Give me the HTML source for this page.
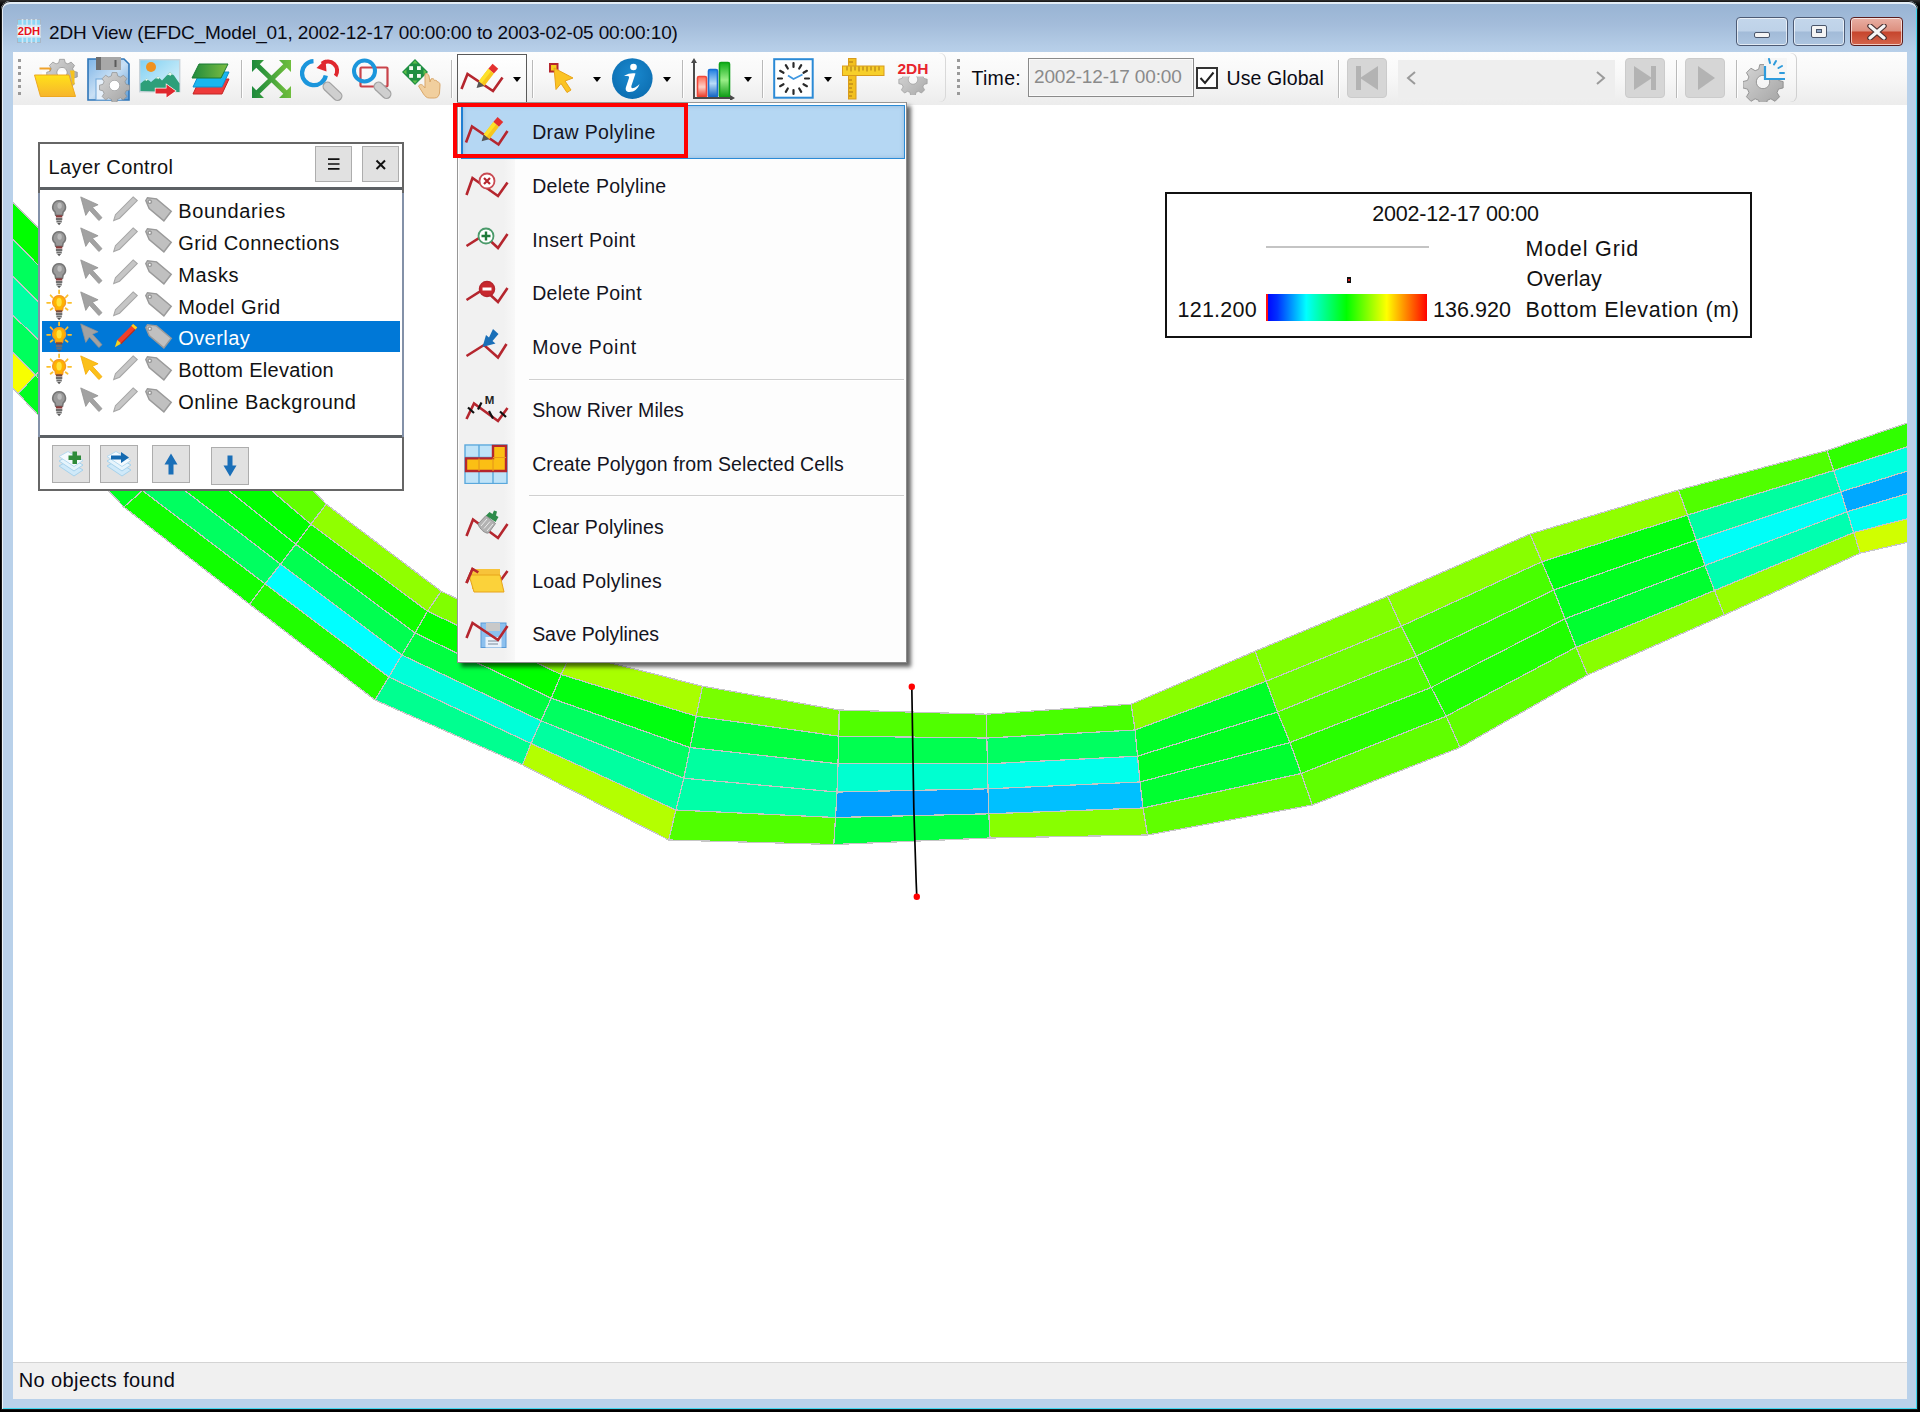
<!DOCTYPE html>
<html><head><meta charset="utf-8"><title>2DH View</title>
<style>
*{box-sizing:border-box;margin:0;padding:0}
html,body{width:1920px;height:1412px;overflow:hidden;background:#000}
body{background:linear-gradient(#2e2e2e 0,#111 3px,#000 6px)}
body{font-family:"Liberation Sans",sans-serif;color:#111;position:relative}
.abs{position:absolute}
#frame{position:absolute;left:1px;top:1px;width:1917px;height:1409px;border-radius:9px 9px 0 0;
 background:linear-gradient(#97b3d3 0px,#a3bcda 23px,#b4cce6 45px,#b9d1ea 53px,#b9d1ea 100%);
 box-shadow:inset 0 0 0 1px #1a1a1a, inset 0 3px 0 0 rgba(240,247,252,.85), inset 2px 0 0 0 rgba(255,255,255,.75), inset -2px -2px 0 0 #3fd8f0}
#client{position:absolute;left:13px;top:52px;width:1894px;height:1347px;background:#fff;overflow:hidden}
#title{position:absolute;left:49px;top:21px;font-size:19px;line-height:24px;white-space:nowrap;color:#0a0a14;letter-spacing:-0.13px}
.wbtn{position:absolute;top:17px;width:52px;height:29px;border-radius:4px;border:1px solid #4d5b75;
 background:linear-gradient(#c3d6eb 0,#bed2e8 48%,#a2bbd8 52%,#adc5e0 100%);box-shadow:inset 0 0 0 1px rgba(255,255,255,.65)}
#toolbar{position:absolute;left:0;top:0;width:1894px;height:53px;z-index:2;background:linear-gradient(#fdfdfd 0,#f8f8f8 45%,#ececec 100%)}
#tb2{position:absolute;left:934px;top:1px;width:850px;height:49px;border-radius:0 6px 6px 0;box-shadow:1px 0 0 #d0d0d0}
.sep{position:absolute;top:8px;width:2px;height:38px;background:#b9b9b9;border-right:1px solid #fff}
.grip{position:absolute;top:7px;width:3px;height:36px;background:repeating-linear-gradient(#9a9a9a 0,#9a9a9a 3px,transparent 3px,transparent 6.6px)}
.dd{position:absolute;top:25px;width:0;height:0;border-left:4.5px solid transparent;border-right:4.5px solid transparent;border-top:5px solid #000}
.ico{position:absolute}
#canvas{position:absolute;left:0;top:51px;width:1894px;height:1259px;background:#fff}
svg.river{position:absolute;left:0;top:0}
#status{position:absolute;left:0;top:1310px;width:1894px;height:37px;background:#f0f0f0;border-top:1px solid #d4d4d4;font-size:20px;line-height:34.5px;padding-left:5.700px;color:#0a0a14;letter-spacing:.4px}
</style></head><body>
<div id="frame"></div>
<!-- title bar -->
<svg class="abs" style="left:17px;top:19px" width="24" height="24" viewBox="0 0 24 24">
<rect x="0.5" y="0.5" width="23" height="23" fill="#8fd6f4" stroke="#a9b7c6"/>
<g stroke="#d4e6f4" stroke-width="1.6"><path d="M5.500 0v24M10 0v24M14.500 0v24M19 0v24M0 6.500h24M0 18h24"/></g>
<rect x="0.5" y="7.500" width="23" height="10" fill="#fff" opacity=".85"/>
<text x="12" y="16.2" font-family="Liberation Sans" font-weight="bold" font-size="11" text-anchor="middle" fill="#e8141c" textLength="22.500" lengthAdjust="spacingAndGlyphs">2DH</text>
</svg>
<div id="title">2DH View (EFDC_Model_01, 2002-12-17 00:00:00 to 2003-02-05 00:00:10)</div>
<div class="wbtn" style="left:1736px"><div class="abs" style="left:17px;top:14px;width:16px;height:6px;background:#f4f4f4;border:1px solid #4a566b;border-radius:2px"></div></div>
<div class="wbtn" style="left:1793px"><div class="abs" style="left:17px;top:7px;width:16px;height:13px;background:#f4f4f4;border:1px solid #4a566b;border-radius:2px"></div><div class="abs" style="left:22px;top:11px;width:6px;height:4px;background:#8fa7c6;border:1px solid #4a566b"></div></div>
<div class="wbtn" style="left:1850px;width:53px;border-color:#5b1c1c;background:linear-gradient(#e9b0a4 0,#dc8f7f 48%,#c6452d 52%,#d4654c 100%)">
<svg class="abs" style="left:16px;top:6px" width="20" height="16" viewBox="0 0 20 16"><path d="M3 2L17 14M17 2L3 14" stroke="#4a3030" stroke-width="5.5" stroke-linecap="round"/><path d="M3 2L17 14M17 2L3 14" stroke="#f6f6f6" stroke-width="3.2" stroke-linecap="round"/></svg></div>
<div id="client">
<div id="toolbar">
<div class="grip" style="left:5px"></div>
<!-- 1 folder gear -->
<svg class="ico" style="left:20px;top:6px" width="46" height="40" viewBox="0 0 46 40">
<defs><linearGradient id="gf" x1="0" y1="0" x2="0" y2="1"><stop offset="0" stop-color="#ffe11a"/><stop offset="1" stop-color="#f7b52c"/></linearGradient>
<linearGradient id="gg" x1="0" y1="0" x2="1" y2="1"><stop offset="0" stop-color="#d6d6d6"/><stop offset="1" stop-color="#a2a2a2"/></linearGradient></defs>
<path d="M6.500 10.500h11v3.500" fill="none" stroke="#f0a22a" stroke-width="2.200"/><path d="M9 13.500h28v8H9z" fill="#fff"/>
<g transform="translate(29,14.500) scale(1.1)"><path id="gear1" d="M-2.2,-12h4.4l.8,3.2 2.4,1 2.9,-1.7 3.1,3.1 -1.7,2.9 1,2.4 3.2,.8v4.4l-3.2,.8 -1,2.4 1.7,2.9 -3.1,3.1 -2.9,-1.7 -2.4,1 -.8,3.2h-4.4l-.8,-3.2 -2.4,-1 -2.9,1.7 -3.1,-3.1 1.7,-2.9 -1,-2.4 -3.2,-.8v-4.4l3.2,-.8 1,-2.4 -1.7,-2.9 3.1,-3.1 2.9,1.7 2.4,-1z M0,-4.6a4.6,4.6 0 1,0 0.01,0z" fill="url(#gg)" stroke="#8a8a8a" stroke-width=".6" fill-rule="evenodd"/></g>
<path d="M37 12.500h4.500v14h-2z" fill="#f6c21c"/>
<path d="M1.5 17h34.5l6.5 21.5H7.5z" fill="url(#gf)" stroke="#eea820" stroke-width="1"/>
</svg>
<!-- 2 save gear -->
<svg class="ico" style="left:74px;top:4px" width="44" height="46" viewBox="0 0 44 46">
<defs><linearGradient id="gs" x1="0" y1="0" x2="1" y2="1"><stop offset="0" stop-color="#7db4e6"/><stop offset=".5" stop-color="#c9e0f5"/><stop offset="1" stop-color="#5a9ad6"/></linearGradient></defs>
<path d="M1 3h36l5 5v36H1z" fill="url(#gs)" stroke="#2f76b8" stroke-width="1.6"/>
<rect x="9" y="1" width="25" height="13" fill="#a8a8a8"/><rect x="9" y="1" width="5" height="13" fill="#6e6e6e"/><rect x="27.5" y="4" width="2" height="7" fill="#5a5a5a"/>
<rect x="9" y="23" width="26" height="21" fill="#e6f0fa" stroke="#6ea5d8" stroke-width="1"/>
<g transform="translate(27.500,29.500) scale(1.08)"><use href="#gear1"/></g><circle cx="27.500" cy="29.500" r="4.800" fill="#fff"/>
</svg>
<!-- 3 image export -->
<svg class="ico" style="left:126px;top:6px" width="42" height="40" viewBox="0 0 42 40">
<defs><linearGradient id="gsky" x1="0" y1="0" x2="1" y2="1"><stop offset="0" stop-color="#7fd0f2"/><stop offset="1" stop-color="#e4f5fc"/></linearGradient></defs>
<rect x=".7" y="1.7" width="40" height="32" fill="url(#gsky)" stroke="#c9d3da" stroke-width="1.4"/>
<circle cx="12" cy="9" r="5" fill="#f0921e"/>
<path d="M1.5 33V25.500l6-5 4.500 3.500 3-2.500 4-3 4 4 8-8.500 4 3.500 5.500 8v8.500z" fill="#2e9f7a"/><path d="M31 14l-3 3.200 2 -.5 1.200 1.300 1.200-1.500 1.800.5zM19 18.500l-2.600 2 1.800-.2 1 1 1-1.200 1.600.4zM7.500 20.500l-2.400 2 1.600-.2.800.8 1-1 1.500.2z" fill="#eaf7f1"/>
<path d="M16.500 30.500h11v-4l9 6.500-9 6.500v-4h-11z" fill="#e0282e" stroke="#fff" stroke-width="1.400" paint-order="stroke"/>
</svg>
<!-- 4 layers -->
<svg class="ico" style="left:178px;top:10px" width="40" height="34" viewBox="0 0 40 34">
<defs><linearGradient id="gl1" x1="0" y1="0" x2="1" y2="0"><stop offset="0" stop-color="#1f8a3c"/><stop offset="1" stop-color="#7dbd42"/></linearGradient></defs>
<path d="M9 17h29l-7 15H2z" fill="#ee3a3a" stroke="#c32424" stroke-width="1"/>
<path d="M9 10h29l-7 15H2z" fill="#19b6ef" stroke="#0c8fd0" stroke-width="1"/>
<path d="M8 2h29l-7 14H1z" fill="url(#gl1)" stroke="#1b7a34" stroke-width="1"/>
</svg>
<div class="sep" style="left:228px"></div>
<!-- 5 full extent -->
<svg class="ico" style="left:238px;top:7px" width="41" height="40" viewBox="0 0 41 40">
<defs><linearGradient id="gx" x1="0" y1="0" x2="1" y2="0"><stop offset="0" stop-color="#1d8a3c"/><stop offset="1" stop-color="#6fbe3c"/></linearGradient></defs>
<g fill="url(#gx)" stroke="url(#gx)"><path d="M5 5L36 35M36 5L5 35" stroke-width="5" fill="none"/>
<path d="M1 1h12L1 13zM40 1v12L28 1zM1 39V27l12 12zM40 39H28l12-12z" stroke="none"/></g>
</svg>
<!-- 6 zoom prev -->
<svg class="ico" style="left:287px;top:5px" width="44" height="45" viewBox="0 0 44 45">
<path d="M13.500 4.200A12 12 0 1 0 25.800 18.500" fill="none" stroke="#1b96dc" stroke-width="4.300"/>
<path d="M22 6.500a9.300 9.300 0 0 1 13.500 12.500" fill="none" stroke="#e0282e" stroke-width="4"/>
<path d="M16.500 11l9-8.500 1 12z" fill="#e0282e"/>
<path d="M27.500 29.500L37.500 39" stroke="#a2a2a2" stroke-width="10" stroke-linecap="round"/><path d="M27.500 29.500L37.500 39" stroke="#cfcfcf" stroke-width="7.500" stroke-linecap="round"/>
</svg>
<!-- 7 zoom window -->
<svg class="ico" style="left:338px;top:4px" width="42" height="44" viewBox="0 0 42 44">
<rect x="9.500" y="11.500" width="27" height="19" rx="1" fill="none" stroke="#c9434a" stroke-width="2.200"/>
<circle cx="13.500" cy="15" r="10.500" fill="none" stroke="#1b96dc" stroke-width="4"/>
<path d="M27.500 30.500L35.500 38" stroke="#a2a2a2" stroke-width="10" stroke-linecap="round"/><path d="M27.500 30.500L35.500 38" stroke="#cfcfcf" stroke-width="7.500" stroke-linecap="round"/>
</svg>
<!-- 8 pan -->
<svg class="ico" style="left:388px;top:6px" width="42" height="42" viewBox="0 0 42 42">
<path d="M14 1l13 13-13 13L1 14z" fill="#1f8f42"/>
<g fill="#f4fbf4"><rect x="8.200" y="8.200" width="3.800" height="3.800"/><rect x="16" y="8.200" width="3.800" height="3.800"/><rect x="8.200" y="16" width="3.800" height="3.800"/><rect x="16" y="16" width="3.800" height="3.800"/></g><g fill="#5fbf4a"><path d="M14 2.500l2.500 3h-5zM14 25.500l2.500-3h-5zM2.500 14l3-2.500v5zM25.500 14l-3-2.500v5z"/></g>
<path d="M24 16c2-1 3.500 0 4 2l1 6 1-3c2-1 3 0 3.500 1.500 1.500-.5 2.500 0 3 1.500 1.500 0 2.500 1 2.500 3l-.5 8c-.5 3-2 5-5 5h-5c-3 0-4-1.500-6-4l-5-8c1.500-2 3-2 5 0l1.500 2z" fill="#f1cf9e" stroke="#d9a76a" stroke-width="1"/>
</svg>
<div class="sep" style="left:438px"></div>
<!-- dropdown button (pressed) -->
<div class="abs" style="left:444px;top:2px;width:70px;height:50px;border:1.500px solid #5a5a5a;border-bottom:none;background:linear-gradient(#fff,#f4f4f4)"></div>
<svg class="ico" style="left:446px;top:11px" width="46" height="32" viewBox="0 0 46 32">
<path d="M2.500 26L8.500 11 34 28 43.500 14.500" fill="none" stroke="#b5262e" stroke-width="2.600" stroke-linejoin="miter"/>
<path d="M33.6 0.8 L39.2 5.7 L34.9 10.6 L29.3 5.8z" fill="#e3302f"/><path d="M29.3 5.8 L34.9 10.6 L25.3 23.0 L19.7 18.2z" fill="#f7c51c"/><path d="M29.3 5.8 L32.1 8.2 L22.5 20.6 L19.7 18.2z" fill="#fde12a"/><path d="M19.7 18.2 L25.3 23.0 L17.6 25.0z" fill="#565656"/>
</svg>
<div class="dd" style="left:500px"></div>
<div class="sep" style="left:519px"></div>
<!-- select -->
<svg class="ico" style="left:535px;top:10px" width="28" height="33" viewBox="0 0 28 33">
<rect x="2" y="2" width="7.500" height="7.500" fill="#f6cf1c" stroke="#b5262e" stroke-width="2"/>
<path d="M6 6l19 10-8 3 6 9-4 2.500-6-9-5 6z" fill="#fbc424" stroke="#e8a41a" stroke-width="1"/>
</svg>
<div class="dd" style="left:580px"></div>
<!-- info -->
<svg class="ico" style="left:598px;top:5px" width="43" height="43" viewBox="0 0 43 43">
<defs><radialGradient id="gi" cx=".5" cy=".4" r=".6"><stop offset="0" stop-color="#1a8ad0"/><stop offset="1" stop-color="#0d6fb2"/></radialGradient></defs>
<circle cx="21.300" cy="21.600" r="20.300" fill="url(#gi)"/>
<circle cx="22.500" cy="10" r="3.300" fill="#fff"/>
<path d="M13 19c4-2.500 8-3 11.500-2.500l-4 12c-.6 2 .2 3 2 2.500 2-.6 4-2 6-4-1.500 4.500-5 8-10 8-3 0-4.500-2-3.500-5l3-9c.4-1.300-.2-2-1.500-2z" fill="#fff"/>
</svg>
<div class="dd" style="left:650px"></div>
<div class="sep" style="left:669px"></div>
<!-- chart -->
<svg class="ico" style="left:678px;top:6px" width="44" height="42" viewBox="0 0 44 42">
<defs><linearGradient id="gc1" x1="0" y1="0" x2="0" y2="1"><stop offset="0" stop-color="#ff6a55"/><stop offset=".5" stop-color="#ffd0c6"/><stop offset="1" stop-color="#e5321e"/></linearGradient>
<linearGradient id="gc2" x1="0" y1="0" x2="0" y2="1"><stop offset="0" stop-color="#1f7fe0"/><stop offset=".5" stop-color="#b9dcf8"/><stop offset="1" stop-color="#0a5fc0"/></linearGradient>
<linearGradient id="gc3" x1="0" y1="0" x2="0" y2="1"><stop offset="0" stop-color="#0fae18"/><stop offset=".5" stop-color="#9aee88"/><stop offset="1" stop-color="#0a9a12"/></linearGradient></defs>
<rect x="6.500" y="18.500" width="9" height="21" rx="1.500" fill="url(#gc1)" stroke="#f0483a" stroke-width="1.600"/>
<rect x="17.500" y="11.500" width="9" height="28" rx="1.500" fill="url(#gc2)" stroke="#1a6fd4" stroke-width="1.600"/>
<rect x="28.500" y="4.500" width="10" height="35" rx="1.500" fill="url(#gc3)" stroke="#0fa018" stroke-width="1.600"/>
<path d="M3 3v37h38" fill="none" stroke="#4a4a4a" stroke-width="2"/><path d="M3 0l3 5H0zM44 40l-5 3v-6z" fill="#4a4a4a"/>
</svg>
<div class="dd" style="left:731px"></div>
<div class="sep" style="left:749px"></div>
<!-- clock -->
<svg class="ico" style="left:760px;top:6px" width="41" height="41" viewBox="0 0 41 41">
<rect x="1.200" y="1.200" width="38.500" height="38.500" fill="#fff" stroke="#2b8ad6" stroke-width="2"/>
<g stroke="#2a2a2a" stroke-width="2.200" stroke-linecap="round"><path d="M20.500 5v4M20.500 32v4M5 20.500h4M32 20.500h4M12.800 7.100l2 3.400M26.200 30.500l2 3.400M7.100 12.800l3.400 2M30.500 26.200l3.400 2M28.200 7.100l-2 3.400M14.800 30.500l-2 3.400M33.900 12.800l-3.400 2M10.500 26.200l-3.400 2"/></g>
<path d="M15 17.500l5.500 3.500 9-4.500" fill="none" stroke="#3f97e0" stroke-width="1.800"/>
</svg>
<div class="dd" style="left:811px"></div>
<!-- ruler -->
<svg class="ico" style="left:829px;top:6px" width="43" height="42" viewBox="0 0 43 42">
<rect x="6.500" y=".5" width="7.500" height="40.500" fill="#f2c01e" stroke="#d89b1c"/>
<rect x=".5" y="8" width="41.500" height="9.500" fill="#f7cf2a" stroke="#d89b1c"/>
<g stroke="#a87414" stroke-width="1"><path d="M5 8.500v4M9 8.500v5M13 8.500v4M17 8.500v5M21 8.500v4M25 8.500v5M29 8.500v4M33 8.500v5M37 8.500v4M7 22h3M7 26h4M7 30h3M7 34h4M7 38h3M7 4h4"/></g>
</svg>
<!-- 2DH gear -->
<svg class="ico" style="left:883px;top:9px" width="34" height="34" viewBox="0 0 34 34">
<g transform="translate(17,18.500) scale(1.02)" opacity=".9"><use href="#gear1"/></g>
<rect x="0" y="0" width="34" height="15.500" fill="#f9f9f9"/>
<text x="17" y="13" font-family="Liberation Sans" font-weight="bold" font-size="14.500" text-anchor="middle" fill="#e8242c" textLength="31" lengthAdjust="spacingAndGlyphs">2DH</text>
</svg>
<div class="abs" style="left:0;top:1px;width:932px;height:49px;border-radius:0 6px 6px 0;box-shadow:1px 0 0 #d9d9d9"></div>
<!-- second toolbar -->
<div class="grip" style="left:944px"></div>
<div class="abs" style="left:958.5px;top:13.5px;font-size:19.5px;line-height:24px;color:#0a0a14;letter-spacing:.3px">Time:</div>
<div class="abs" style="left:1015px;top:6px;width:166px;height:39px;border:1px solid #8a8a8a;background:#f0f0f0;box-shadow:inset 0 0 0 1px #fafafa;font-size:19px;line-height:36px;padding-left:5px;color:#8a8a8a;white-space:nowrap;letter-spacing:-0.15px">2002-12-17 00:00</div>
<div class="abs" style="left:1183px;top:15px;width:22px;height:22px;border:2px solid #333;background:#fff"></div>
<svg class="ico" style="left:1183px;top:15px" width="22" height="22" viewBox="0 0 22 22"><path d="M4.500 11l4.500 5 8.500-10.500" fill="none" stroke="#222" stroke-width="2"/></svg>
<div class="abs" style="left:1213.5px;top:13.5px;font-size:19.5px;line-height:24px;color:#0a0a14;white-space:nowrap;letter-spacing:.1px">Use Global</div>
<div class="sep" style="left:1325px"></div>
<div class="abs" style="left:1334px;top:6px;width:40px;height:40px;border-radius:4px;background:#d6d6d6;border:1px solid #cbcbcb"></div>
<svg class="ico" style="left:1334px;top:6px" width="40" height="40" viewBox="0 0 40 40"><rect x="9" y="8" width="5" height="24" fill="#b3b3b3"/><path d="M31 8v24L13 20z" fill="#b3b3b3"/></svg>
<div class="abs" style="left:1385px;top:8px;width:217px;height:38px;background:#eeeeee"></div>
<svg class="ico" style="left:1392px;top:17px" width="12" height="18" viewBox="0 0 12 18"><path d="M10 3L3 9l7 6" fill="none" stroke="#9a9a9a" stroke-width="2"/></svg>
<svg class="ico" style="left:1582px;top:17px" width="12" height="18" viewBox="0 0 12 18"><path d="M2 3l7 6-7 6" fill="none" stroke="#9a9a9a" stroke-width="2"/></svg>
<div class="abs" style="left:1612px;top:6px;width:40px;height:40px;border-radius:4px;background:#d6d6d6;border:1px solid #cbcbcb"></div>
<svg class="ico" style="left:1612px;top:6px" width="40" height="40" viewBox="0 0 40 40"><rect x="26" y="8" width="5" height="24" fill="#b3b3b3"/><path d="M9 8v24L27 20z" fill="#b3b3b3"/></svg>
<div class="sep" style="left:1663px"></div>
<div class="abs" style="left:1672px;top:6px;width:40px;height:40px;border-radius:4px;background:#d6d6d6;border:1px solid #cbcbcb"></div>
<svg class="ico" style="left:1672px;top:6px" width="40" height="40" viewBox="0 0 40 40"><path d="M13 8v24L30 20z" fill="#b3b3b3"/></svg>
<div class="sep" style="left:1723px"></div>
<svg class="ico" style="left:1730px;top:6px" width="44" height="44" viewBox="0 0 44 44">
<g transform="translate(20,24) scale(1.45)"><use href="#gear1"/></g>
<rect x="21" y="0" width="23" height="22" fill="#f6f6f6"/>
<path d="M22 8v13h20" fill="none" stroke="#2e9bdc" stroke-width="2.200"/>
<g stroke="#2e9bdc" stroke-width="2" stroke-linecap="round"><path d="M26 1l1 4M33 3l-2 3.500M39 8l-3.500 2M41 15h-4"/></g>
</svg>
<div class="abs" style="left:934px;top:1px;width:849px;height:49px;border-radius:0 6px 6px 0;box-shadow:1px 0 0 #d0d0d0"></div>
</div>
<div id="canvas">
<svg class="river" width="1894" height="1259" viewBox="13 103 1894 1259" shape-rendering="crispEdges">
<polygon points="13.0,202.8 38.6,228.0 38.6,265.6 13.0,239.4" fill="#00ff00"/>
<polygon points="13.0,239.4 38.6,265.6 38.6,301.8 13.0,276.2" fill="#00ff5c"/>
<polygon points="13.0,276.2 38.6,301.8 38.6,339.8 13.0,315.5" fill="#00ffa2"/>
<polygon points="13.0,315.5 38.6,339.8 38.6,378.6 13.0,352.2" fill="#00ff5c"/>
<polygon points="38.6,228.0 141.0,328.8 141.0,370.4 38.6,265.6" fill="#00ff00"/>
<polygon points="38.6,265.6 141.0,370.4 141.0,404.2 38.6,301.8" fill="#00ff5c"/>
<polygon points="38.6,301.8 141.0,404.2 141.0,437.0 38.6,339.8" fill="#00ffa2"/>
<polygon points="38.6,339.8 141.0,437.0 141.0,484.2 38.6,378.6" fill="#00ff5c"/>
<polygon points="308.3,485.5 326.2,504.2 310.8,524.2 251.6,473.5" fill="#60ff00"/>
<polygon points="251.6,473.5 310.8,524.2 295.8,544.2 192.4,461.5" fill="#00ff00"/>
<polygon points="192.4,461.5 295.8,544.2 280.5,564.2 131.7,449.5" fill="#00ff10"/>
<polygon points="131.7,449.5 280.5,564.2 265.0,583.8 142.5,490.6" fill="#00ff60"/>
<polygon points="142.5,490.6 265.0,583.8 249.5,604.2 123.8,507.0" fill="#10ff00"/>
<polygon points="326.2,504.2 441.2,591.2 427.5,611.2 310.8,524.2" fill="#90ff00"/>
<polygon points="310.8,524.2 427.5,611.2 415.0,633.0 295.8,544.2" fill="#10ff00"/>
<polygon points="295.8,544.2 415.0,633.0 401.8,655.0 280.5,564.2" fill="#00ff50"/>
<polygon points="280.5,564.2 401.8,655.0 388.8,677.0 265.0,583.8" fill="#00ffff"/>
<polygon points="265.0,583.8 388.8,677.0 375.0,700.0 249.5,604.2" fill="#20ff00"/>
<polygon points="441.2,591.2 571.0,653.0 561.2,674.5 427.5,611.2" fill="#80ff00"/>
<polygon points="427.5,611.2 561.2,674.5 551.2,698.2 415.0,633.0" fill="#00ff00"/>
<polygon points="415.0,633.0 551.2,698.2 541.0,720.8 401.8,655.0" fill="#00ff40"/>
<polygon points="401.8,655.0 541.0,720.8 531.0,743.4 388.8,677.0" fill="#00ffd8"/>
<polygon points="388.8,677.0 531.0,743.4 522.5,764.8 375.0,700.0" fill="#00ff90"/>
<polygon points="571.0,653.0 702.5,686.2 696.2,716.2 561.2,674.5" fill="#a8ff00"/>
<polygon points="561.2,674.5 696.2,716.2 690.0,747.5 551.2,698.2" fill="#00ff10"/>
<polygon points="551.2,698.2 690.0,747.5 683.8,778.2 541.0,720.8" fill="#00ff60"/>
<polygon points="541.0,720.8 683.8,778.2 675.8,810.0 531.0,743.4" fill="#00ffa0"/>
<polygon points="531.0,743.4 675.8,810.0 668.8,840.0 522.5,764.8" fill="#b4ff00"/>
<polygon points="702.5,686.2 839.2,710.0 838.8,736.2 696.2,716.2" fill="#78ff00"/>
<polygon points="696.2,716.2 838.8,736.2 838.0,763.8 690.0,747.5" fill="#00ff40"/>
<polygon points="690.0,747.5 838.0,763.8 837.0,792.0 683.8,778.2" fill="#00ffa0"/>
<polygon points="683.8,778.2 837.0,792.0 835.5,817.5 675.8,810.0" fill="#00ffa8"/>
<polygon points="675.8,810.0 835.5,817.5 833.8,844.5 668.8,840.0" fill="#50ff00"/>
<polygon points="839.2,710.0 986.2,714.2 986.8,738.0 838.8,736.2" fill="#50ff00"/>
<polygon points="838.8,736.2 986.8,738.0 987.5,763.8 838.0,763.8" fill="#00ff50"/>
<polygon points="838.0,763.8 987.5,763.8 988.0,788.8 837.0,792.0" fill="#00ffd0"/>
<polygon points="837.0,792.0 988.0,788.8 988.8,813.8 835.5,817.5" fill="#009fff"/>
<polygon points="835.5,817.5 988.8,813.8 990.0,838.0 833.8,844.5" fill="#00ff40"/>
<polygon points="986.2,714.2 1131.2,704.2 1135.0,730.0 986.8,738.0" fill="#48ff00"/>
<polygon points="986.8,738.0 1135.0,730.0 1137.5,756.2 987.5,763.8" fill="#00ff60"/>
<polygon points="987.5,763.8 1137.5,756.2 1140.0,782.0 988.0,788.8" fill="#00ffec"/>
<polygon points="988.0,788.8 1140.0,782.0 1143.0,808.0 988.8,813.8" fill="#00c0ff"/>
<polygon points="988.8,813.8 1143.0,808.0 1147.5,835.0 990.0,838.0" fill="#88ff00"/>
<polygon points="1131.2,704.2 1255.0,651.2 1266.2,681.2 1135.0,730.0" fill="#88ff00"/>
<polygon points="1135.0,730.0 1266.2,681.2 1277.5,712.0 1137.5,756.2" fill="#00ff28"/>
<polygon points="1137.5,756.2 1277.5,712.0 1290.0,742.5 1140.0,782.0" fill="#00ff20"/>
<polygon points="1140.0,782.0 1290.0,742.5 1301.2,773.5 1143.0,808.0" fill="#00ff30"/>
<polygon points="1143.0,808.0 1301.2,773.5 1312.3,805.0 1147.5,835.0" fill="#60ff00"/>
<polygon points="1255.0,651.2 1387.5,596.2 1401.2,626.2 1266.2,681.2" fill="#80ff00"/>
<polygon points="1266.2,681.2 1401.2,626.2 1416.2,656.2 1277.5,712.0" fill="#70ff00"/>
<polygon points="1277.5,712.0 1416.2,656.2 1431.2,687.5 1290.0,742.5" fill="#50ff00"/>
<polygon points="1290.0,742.5 1431.2,687.5 1446.2,716.2 1301.2,773.5" fill="#28ff00"/>
<polygon points="1301.2,773.5 1446.2,716.2 1460.0,747.5 1312.3,805.0" fill="#60ff00"/>
<polygon points="1387.5,596.2 1530.0,534.0 1541.8,561.8 1401.2,626.2" fill="#88ff00"/>
<polygon points="1401.2,626.2 1541.8,561.8 1553.8,590.0 1416.2,656.2" fill="#48ff00"/>
<polygon points="1416.2,656.2 1553.8,590.0 1565.0,618.8 1431.2,687.5" fill="#30ff00"/>
<polygon points="1431.2,687.5 1565.0,618.8 1576.2,647.2 1446.2,716.2" fill="#20ff00"/>
<polygon points="1446.2,716.2 1576.2,647.2 1587.5,675.0 1460.0,747.5" fill="#60ff00"/>
<polygon points="1530.0,534.0 1678.4,490.0 1687.5,515.0 1541.8,561.8" fill="#90ff00"/>
<polygon points="1541.8,561.8 1687.5,515.0 1696.2,540.0 1553.8,590.0" fill="#00ff10"/>
<polygon points="1553.8,590.0 1696.2,540.0 1705.0,565.5 1565.0,618.8" fill="#00ff20"/>
<polygon points="1565.0,618.8 1705.0,565.5 1714.5,590.5 1576.2,647.2" fill="#00ff30"/>
<polygon points="1576.2,647.2 1714.5,590.5 1724.2,615.0 1587.5,675.0" fill="#88ff00"/>
<polygon points="1678.4,490.0 1827.0,450.5 1833.8,470.5 1687.5,515.0" fill="#50ff00"/>
<polygon points="1687.5,515.0 1833.8,470.5 1840.8,491.8 1696.2,540.0" fill="#00ffa0"/>
<polygon points="1696.2,540.0 1840.8,491.8 1847.0,511.8 1705.0,565.5" fill="#00fff8"/>
<polygon points="1705.0,565.5 1847.0,511.8 1853.8,532.5 1714.5,590.5" fill="#00ffb0"/>
<polygon points="1714.5,590.5 1853.8,532.5 1860.0,553.2 1724.2,615.0" fill="#98ff00"/>
<polygon points="1827.0,450.5 1907.0,423.0 1907.0,447.0 1833.8,470.5" fill="#30ff00"/>
<polygon points="1833.8,470.5 1907.0,447.0 1907.0,471.2 1840.8,491.8" fill="#00ffe0"/>
<polygon points="1840.8,491.8 1907.0,471.2 1907.0,493.8 1847.0,511.8" fill="#00a8ff"/>
<polygon points="1847.0,511.8 1907.0,493.8 1907.0,518.8 1853.8,532.5" fill="#00fff0"/>
<polygon points="1853.8,532.5 1907.0,518.8 1907.0,542.5 1860.0,553.2" fill="#d0ff00"/>
<polygon points="13.0,352.2 35.5,375.3 18.0,393.5 13.0,388.5" fill="#f8ff00"/>
<polygon points="35.5,375.3 142.5,490.6 123.8,507.0 18.0,393.5" fill="#00ff20"/>
<polyline points="308.3,485.5 326.2,504.2 441.2,591.2 571.0,653.0 702.5,686.2 839.2,710.0 986.2,714.2 1131.2,704.2 1255.0,651.2 1387.5,596.2 1530.0,534.0 1678.4,490.0 1827.0,450.5 1907.0,423.0" fill="none" stroke="#c6c6c6" stroke-width="1.25"/>
<polyline points="13.0,202.8 38.6,228.0 141.0,328.8" fill="none" stroke="#c6c6c6" stroke-width="1.25"/>
<polyline points="251.6,473.5 310.8,524.2 427.5,611.2 561.2,674.5 696.2,716.2 838.8,736.2 986.8,738.0 1135.0,730.0 1266.2,681.2 1401.2,626.2 1541.8,561.8 1687.5,515.0 1833.8,470.5 1907.0,447.0" fill="none" stroke="#c6c6c6" stroke-width="1.25"/>
<polyline points="13.0,239.4 38.6,265.6 141.0,370.4" fill="none" stroke="#c6c6c6" stroke-width="1.25"/>
<polyline points="192.4,461.5 295.8,544.2 415.0,633.0 551.2,698.2 690.0,747.5 838.0,763.8 987.5,763.8 1137.5,756.2 1277.5,712.0 1416.2,656.2 1553.8,590.0 1696.2,540.0 1840.8,491.8 1907.0,471.2" fill="none" stroke="#c6c6c6" stroke-width="1.25"/>
<polyline points="13.0,276.2 38.6,301.8 141.0,404.2" fill="none" stroke="#c6c6c6" stroke-width="1.25"/>
<polyline points="131.7,449.5 280.5,564.2 401.8,655.0 541.0,720.8 683.8,778.2 837.0,792.0 988.0,788.8 1140.0,782.0 1290.0,742.5 1431.2,687.5 1565.0,618.8 1705.0,565.5 1847.0,511.8 1907.0,493.8" fill="none" stroke="#c6c6c6" stroke-width="1.25"/>
<polyline points="13.0,315.5 38.6,339.8 141.0,437.0" fill="none" stroke="#c6c6c6" stroke-width="1.25"/>
<polyline points="142.5,490.6 265.0,583.8 388.8,677.0 531.0,743.4 675.8,810.0 835.5,817.5 988.8,813.8 1143.0,808.0 1301.2,773.5 1446.2,716.2 1576.2,647.2 1714.5,590.5 1853.8,532.5 1907.0,518.8" fill="none" stroke="#c6c6c6" stroke-width="1.25"/>
<polyline points="123.8,507.0 249.5,604.2 375.0,700.0 522.5,764.8 668.8,840.0 833.8,844.5 990.0,838.0 1147.5,835.0 1312.3,805.0 1460.0,747.5 1587.5,675.0 1724.2,615.0 1860.0,553.2 1907.0,542.5" fill="none" stroke="#c6c6c6" stroke-width="1.25"/>
<polyline points="13.0,352.2 35.5,375.3 142.5,490.6" fill="none" stroke="#c6c6c6" stroke-width="1.25"/>
<polyline points="13.0,388.5 18.0,393.5 123.8,507.0" fill="none" stroke="#c6c6c6" stroke-width="1.25"/>
<polyline points="38.6,372.0 18.0,393.5" fill="none" stroke="#c6c6c6" stroke-width="1.25"/>
<polyline points="308.3,485.5 251.6,473.5 192.4,461.5 131.7,449.5 142.5,490.6 123.8,507.0" fill="none" stroke="#c6c6c6" stroke-width="1.25"/>
<polyline points="326.2,504.2 310.8,524.2 295.8,544.2 280.5,564.2 265.0,583.8 249.5,604.2" fill="none" stroke="#c6c6c6" stroke-width="1.25"/>
<polyline points="441.2,591.2 427.5,611.2 415.0,633.0 401.8,655.0 388.8,677.0 375.0,700.0" fill="none" stroke="#c6c6c6" stroke-width="1.25"/>
<polyline points="571.0,653.0 561.2,674.5 551.2,698.2 541.0,720.8 531.0,743.4 522.5,764.8" fill="none" stroke="#c6c6c6" stroke-width="1.25"/>
<polyline points="702.5,686.2 696.2,716.2 690.0,747.5 683.8,778.2 675.8,810.0 668.8,840.0" fill="none" stroke="#c6c6c6" stroke-width="1.25"/>
<polyline points="839.2,710.0 838.8,736.2 838.0,763.8 837.0,792.0 835.5,817.5 833.8,844.5" fill="none" stroke="#c6c6c6" stroke-width="1.25"/>
<polyline points="986.2,714.2 986.8,738.0 987.5,763.8 988.0,788.8 988.8,813.8 990.0,838.0" fill="none" stroke="#c6c6c6" stroke-width="1.25"/>
<polyline points="1131.2,704.2 1135.0,730.0 1137.5,756.2 1140.0,782.0 1143.0,808.0 1147.5,835.0" fill="none" stroke="#c6c6c6" stroke-width="1.25"/>
<polyline points="1255.0,651.2 1266.2,681.2 1277.5,712.0 1290.0,742.5 1301.2,773.5 1312.3,805.0" fill="none" stroke="#c6c6c6" stroke-width="1.25"/>
<polyline points="1387.5,596.2 1401.2,626.2 1416.2,656.2 1431.2,687.5 1446.2,716.2 1460.0,747.5" fill="none" stroke="#c6c6c6" stroke-width="1.25"/>
<polyline points="1530.0,534.0 1541.8,561.8 1553.8,590.0 1565.0,618.8 1576.2,647.2 1587.5,675.0" fill="none" stroke="#c6c6c6" stroke-width="1.25"/>
<polyline points="1678.4,490.0 1687.5,515.0 1696.2,540.0 1705.0,565.5 1714.5,590.5 1724.2,615.0" fill="none" stroke="#c6c6c6" stroke-width="1.25"/>
<polyline points="1827.0,450.5 1833.8,470.5 1840.8,491.8 1847.0,511.8 1853.8,532.5 1860.0,553.2" fill="none" stroke="#c6c6c6" stroke-width="1.25"/>
<polyline points="911.8,686.8 913.8,807.5 916.2,882.5 916.8,896.8" fill="none" stroke="#000" stroke-width="1.700" shape-rendering="auto"/>
<circle cx="911.8" cy="686.8" r="3.2" fill="#ff0000" shape-rendering="auto"/><circle cx="916.8" cy="896.8" r="3.2" fill="#ff0000" shape-rendering="auto"/>
</svg></div>
<div id="status">No objects found</div>
</div><!-- /client -->
<!-- Layer Control panel -->
<style>
#lc{z-index:4;position:absolute;left:38px;top:142px;width:366px;height:349px;background:#fff;border:2px solid #666;}
#lc .hd{position:absolute;left:0;top:0;width:362px;height:45.500px;border-bottom:3px solid #5c6064;font-size:20px;line-height:24px}
#lc .hb{position:absolute;top:2px;width:37px;height:36px;background:#e1e1e1;border:1px solid #adadad;text-align:center;font-size:20px;line-height:32px;color:#111}
#lc .row{position:absolute;left:2px;width:358px;height:31px;font-size:20px;line-height:31px;white-space:nowrap}
#lc .row span{position:absolute;left:136.200px;top:2.600px}
#lc .row.sel{background:#0078d7;color:#fff}
#lc .ft{position:absolute;left:0;top:290.500px;width:362px;height:54.500px;border-top:3px solid #5c6064}
#lc .fb{position:absolute;width:38px;height:38px;background:#e1e1e1;border:1px solid #adadad}
</style>
<svg width="0" height="0" style="position:absolute"><defs>
<g id="bulbOff"><path d="M9.500 1.500a6.300 6.300 0 0 1 4 11.200l-.6 3.300h-6.800l-.6-3.300a6.300 6.300 0 0 1 4-11.200z" fill="#9a9a9a" stroke="#767676" stroke-width="1.600"/><ellipse cx="10" cy="6.500" rx="2.200" ry="3" fill="#bdbdbd"/><rect x="6.300" y="16" width="6.400" height="2.200" fill="#8a3a3a"/><rect x="6.300" y="18.600" width="6.400" height="2.200" fill="#6e6e6e"/><rect x="6.800" y="21.200" width="5.400" height="2" fill="#6e6e6e"/><path d="M7.500 23.600h4l-2 2.400z" fill="#5a5a5a"/></g>
<g id="bulbOn"><g stroke="#fbc02d" stroke-width="1.800" stroke-linecap="round"><path d="M9.500 -4v3M1 1l2 2.200M18 1l-2 2.200M-2.500 8.500h3M18.500 8.500h3M1 15.500l2-1.600M18 15.500l-2-1.600"/></g><path d="M9.500 1.500a6.300 6.300 0 0 1 4 11.200l-.6 3.300h-6.800l-.6-3.300a6.300 6.300 0 0 1 4-11.200z" fill="#ffb300" stroke="#f59a23" stroke-width="1.400"/><ellipse cx="9.500" cy="8" rx="2.600" ry="4.200" fill="#ffe33a"/><rect x="6.300" y="16" width="6.400" height="2.200" fill="#7a4a3a"/><rect x="6.300" y="18.600" width="6.400" height="2.200" fill="#6e6e6e"/><rect x="6.800" y="21.200" width="5.400" height="2" fill="#6e6e6e"/><path d="M7.500 23.600h4l-2 2.400z" fill="#5a5a5a"/></g>
<g id="cur"><path d="M1 1l15.500 7-5 2.200 8.500 9.300-2.800 2.600-8.500-9.400-3.200 4.800z"/></g>
<g id="pen"><path d="M17.500 1.500l3.500 3-15 15-5 2 1.500-5z"/></g>
<g id="tag"><path d="M1.500 3.500l1.500-2.500 8 1 13 11-6.500 8.500-13-11z"/><circle cx="5" cy="4.500" r="1.500" fill="#fff"/></g>
</defs></svg>
<div id="lc">
<div class="hd"><div class="abs" style="left:8.600px;top:11px;white-space:nowrap;letter-spacing:.36px">Layer Control</div>
<div class="hb" style="left:275px"><svg width="12" height="12" viewBox="0 0 12 12" style="position:absolute;left:12px;top:11px"><path d="M0 1.200h11.500M0 6h11.500M0 10.800h11.500" stroke="#111" stroke-width="1.700"/></svg></div>
<div class="hb" style="left:322px"><svg width="12" height="12" viewBox="0 0 12 12" style="position:absolute;left:12px;top:12px"><path d="M1.500 1.500l8.500 8.500M10 1.500L1.500 10" stroke="#111" stroke-width="2"/></svg></div></div>
<div class="row" style="top:49.5px"><svg width="136" height="31" viewBox="0 0 136 31" style="position:absolute;left:0;top:0;overflow:visible"><g transform="translate(7.600,5.300)"><use href="#bulbOff"/></g><g transform="translate(37.600,1.800) scale(1.12)" fill="#a2a2a2" stroke="#929292" stroke-width=".7"><use href="#cur"/></g><g transform="translate(70.5,1.2) scale(1.18)" fill="#c6c6c6" stroke="#a6a6a6" stroke-width=".9"><use href="#pen"/></g><g transform="translate(102.100,2.600) scale(1.13)" fill="#c0c0c0" stroke="#9a9a9a" stroke-width="1.300"><use href="#tag"/></g></svg><span style="letter-spacing:0.65px">Boundaries</span></div>
<div class="row" style="top:81.3px"><svg width="136" height="31" viewBox="0 0 136 31" style="position:absolute;left:0;top:0;overflow:visible"><g transform="translate(7.600,5.300)"><use href="#bulbOff"/></g><g transform="translate(37.600,1.800) scale(1.12)" fill="#a2a2a2" stroke="#929292" stroke-width=".7"><use href="#cur"/></g><g transform="translate(70.5,1.2) scale(1.18)" fill="#c6c6c6" stroke="#a6a6a6" stroke-width=".9"><use href="#pen"/></g><g transform="translate(102.100,2.600) scale(1.13)" fill="#c0c0c0" stroke="#9a9a9a" stroke-width="1.300"><use href="#tag"/></g></svg><span style="letter-spacing:0.44px">Grid Connections</span></div>
<div class="row" style="top:113.2px"><svg width="136" height="31" viewBox="0 0 136 31" style="position:absolute;left:0;top:0;overflow:visible"><g transform="translate(7.600,5.300)"><use href="#bulbOff"/></g><g transform="translate(37.600,1.800) scale(1.12)" fill="#a2a2a2" stroke="#929292" stroke-width=".7"><use href="#cur"/></g><g transform="translate(70.5,1.2) scale(1.18)" fill="#c6c6c6" stroke="#a6a6a6" stroke-width=".9"><use href="#pen"/></g><g transform="translate(102.100,2.600) scale(1.13)" fill="#c0c0c0" stroke="#9a9a9a" stroke-width="1.300"><use href="#tag"/></g></svg><span style="letter-spacing:0.64px">Masks</span></div>
<div class="row" style="top:145.1px"><svg width="136" height="31" viewBox="0 0 136 31" style="position:absolute;left:0;top:0;overflow:visible"><g transform="translate(7.600,5.300)"><use href="#bulbOn"/></g><g transform="translate(37.600,1.800) scale(1.12)" fill="#a2a2a2" stroke="#929292" stroke-width=".7"><use href="#cur"/></g><g transform="translate(70.5,1.2) scale(1.18)" fill="#c6c6c6" stroke="#a6a6a6" stroke-width=".9"><use href="#pen"/></g><g transform="translate(102.100,2.600) scale(1.13)" fill="#c0c0c0" stroke="#9a9a9a" stroke-width="1.300"><use href="#tag"/></g></svg><span style="letter-spacing:0.46px">Model Grid</span></div>
<div class="row sel" style="top:176.9px"><svg width="136" height="31" viewBox="0 0 136 31" style="position:absolute;left:0;top:0;overflow:visible"><g transform="translate(7.600,5.300)"><use href="#bulbOn"/></g><g transform="translate(37.600,1.800) scale(1.12)" fill="#a2a2a2" stroke="#929292" stroke-width=".7"><use href="#cur"/></g><g transform="translate(70.5,1.2) scale(1.18)"><path d="M17.500 1.500l3.500 3-13.500 13.500-3.500-3z" fill="#f0402a"/><path d="M17.500 1.500l3.500 3-1.600 1.600-3.500-3z" fill="#f8d21c"/><path d="M4 15l3.500 3-5.500 3.200z" fill="#f8d21c"/><path d="M19 6.300l-12 12" stroke="#b52a1c" stroke-width="1"/></g><g transform="translate(102.100,2.600) scale(1.13)" fill="#c0c0c0" stroke="#9a9a9a" stroke-width="1.300"><use href="#tag"/></g></svg><span style="letter-spacing:0.44px">Overlay</span></div>
<div class="row" style="top:208.8px"><svg width="136" height="31" viewBox="0 0 136 31" style="position:absolute;left:0;top:0;overflow:visible"><g transform="translate(7.600,5.300)"><use href="#bulbOn"/></g><g transform="translate(37.600,1.800) scale(1.12)" fill="#fbc01a" stroke="#f5a800" stroke-width=".7"><use href="#cur"/></g><g transform="translate(70.5,1.2) scale(1.18)" fill="#c6c6c6" stroke="#a6a6a6" stroke-width=".9"><use href="#pen"/></g><g transform="translate(102.100,2.600) scale(1.13)" fill="#c0c0c0" stroke="#9a9a9a" stroke-width="1.300"><use href="#tag"/></g></svg><span style="letter-spacing:0.29px">Bottom Elevation</span></div>
<div class="row" style="top:240.6px"><svg width="136" height="31" viewBox="0 0 136 31" style="position:absolute;left:0;top:0;overflow:visible"><g transform="translate(7.600,5.300)"><use href="#bulbOff"/></g><g transform="translate(37.600,1.800) scale(1.12)" fill="#a2a2a2" stroke="#929292" stroke-width=".7"><use href="#cur"/></g><g transform="translate(70.5,1.2) scale(1.18)" fill="#c6c6c6" stroke="#a6a6a6" stroke-width=".9"><use href="#pen"/></g><g transform="translate(102.100,2.600) scale(1.13)" fill="#c0c0c0" stroke="#9a9a9a" stroke-width="1.300"><use href="#tag"/></g></svg><span style="letter-spacing:0.48px">Online Background</span></div>
<div class="abs" style="left:-2px;top:49px;width:366px;height:244px;border-left:2px solid #8391a8;border-right:2px solid #8391a8"></div>
<div class="ft">
<div class="fb" style="left:12px;top:7px"><svg width="36" height="36" viewBox="0 0 36 36"><path d="M6 20l9-5 15 9-9 6z" fill="#cfe9f9" stroke="#a6d2ec"/><path d="M6 15l9-5 15 9-9 6z" fill="#e6f4fc" stroke="#a6d2ec"/><path d="M6 10.500l9-5 15 9-9 6z" fill="#f4fafe" stroke="#b6daf0"/><path d="M19.500 5.500h4.500v4h4v4.500h-4v4h-4.500v-4h-4V9.500h4z" fill="#2e8b3a"/></svg></div>
<div class="fb" style="left:60px;top:7px"><svg width="36" height="36" viewBox="0 0 36 36"><path d="M6 20l9-5 15 9-9 6z" fill="#cfe9f9" stroke="#a6d2ec"/><path d="M6 15l9-5 15 9-9 6z" fill="#e6f4fc" stroke="#a6d2ec"/><path d="M6 10.500l9-5 15 9-9 6z" fill="#f4fafe" stroke="#b6daf0"/><path d="M10 9.500h10V6l8 5.500-8 5.500v-3.500H10z" fill="#1469b0"/></svg></div>
<div class="fb" style="left:112px;top:7px"><svg width="36" height="36" viewBox="0 0 36 36"><path d="M18 7.500l6.500 11h-4v10h-5v-10h-4z" fill="#1a6fb8"/></svg></div>
<div class="fb" style="left:171px;top:9px"><svg width="36" height="36" viewBox="0 0 36 36"><path d="M18 28.500l6.500-11h-4v-10h-5v10h-4z" fill="#1a6fb8"/></svg></div>
</div>
</div>
<!-- Legend -->
<div class="abs" style="z-index:4;left:1165px;top:192px;width:587px;height:146px;border:2px solid #111;background:#fff;font-size:21px;line-height:24px;color:#111;white-space:nowrap">
<div class="abs" style="left:0;top:7.500px;width:577px;text-align:center;font-size:21.5px;letter-spacing:-.2px">2002-12-17 00:00</div>
<div class="abs" style="left:99px;top:52px;width:163px;height:1.500px;background:#c4c4c4"></div>
<div class="abs" style="left:358.500px;top:42.800px;font-size:21.5px;letter-spacing:.84px">Model Grid</div>
<div class="abs" style="left:180px;top:83px;width:4px;height:6px;background:#111"></div><div class="abs" style="left:181px;top:85px;width:2px;height:2px;background:#e02020"></div>
<div class="abs" style="left:359.500px;top:72.500px;font-size:21.5px;letter-spacing:.18px">Overlay</div>
<div class="abs" style="left:10.500px;top:103.500px;font-size:21.5px;letter-spacing:.25px">121.200</div>
<div class="abs" style="left:99px;top:100px;width:161px;height:27px;background:linear-gradient(90deg,#0000ff 0%,#0030ff 7%,#00ffff 25%,#00ff00 50%,#ffff00 75%,#ff1800 98%,#ff0000 100%)"></div><div class="abs" style="left:99px;top:100px;width:1.500px;height:27px;background:#ff1010"></div>
<div class="abs" style="left:266px;top:103.500px;font-size:21.5px;letter-spacing:.05px">136.920</div>
<div class="abs" style="left:358.500px;top:103.500px;font-size:21.5px;letter-spacing:.67px">Bottom Elevation (m)</div>
</div>
<!-- Dropdown menu -->
<style>
#menu{z-index:5;position:absolute;left:457px;top:102px;width:450px;height:561px;background:#fdfdfd;border:1px solid #979797;border-right-color:#8a8a8a;border-bottom-color:#8a8a8a;box-shadow:3.500px 3.500px 4px rgba(0,0,0,.6)}
#menu .gut{position:absolute;left:1px;top:1px;width:56px;height:557px;background:linear-gradient(90deg,#f1f1f1 0,#f1f1f1 80%,#f8f8f8 100%)}
#menu .it{position:absolute;left:74.200px;font-size:19.500px;line-height:24px;white-space:nowrap;color:#14141e;letter-spacing:.1px}
#menu .ms{position:absolute;left:71px;width:375px;height:2px;background:#d0d0d0;border-bottom:1px solid #fff}
#menu svg{position:absolute}
</style>
<div id="menu"><div class="gut"></div>
<div class="abs" style="left:3px;top:2px;width:443.500px;height:54px;background:#b5d7f3;border:1px solid #2b8bd6;border-left:2px solid #1f7fd2;box-shadow:inset 0 0 4px rgba(120,160,200,.55)"></div>
<div class="it" style="top:17px;letter-spacing:0.33px">Draw Polyline</div>
<div class="it" style="top:71px;letter-spacing:0.28px">Delete Polyline</div>
<div class="it" style="top:125px;letter-spacing:0.39px">Insert Point</div>
<div class="it" style="top:178px;letter-spacing:0.29px">Delete Point</div>
<div class="it" style="top:232px;letter-spacing:0.71px">Move Point</div>
<div class="ms" style="top:276px"></div>
<div class="it" style="top:295px;letter-spacing:0.07px">Show River Miles</div>
<div class="it" style="top:349px;letter-spacing:0.08px">Create Polygon from Selected Cells</div>
<div class="ms" style="top:392px"></div>
<div class="it" style="top:412px;letter-spacing:0.11px">Clear Polylines</div>
<div class="it" style="top:466px;letter-spacing:0.21px">Load Polylines</div>
<div class="it" style="top:519px;letter-spacing:-0.08px">Save Polylines</div>
<!-- icons: each 44x40 at x=6 -->
<svg style="left:6px;top:9px" width="46" height="40" viewBox="0 0 46 40"><path d="M2 30.500L8 14.500 34.500 32.500 43.500 19" fill="none" stroke="#b5262e" stroke-width="2.600"/><path d="M33.6 5.0 L39.2 9.9 L34.9 14.8 L29.3 10.0z" fill="#e3302f"/><path d="M29.3 10.0 L34.9 14.8 L25.3 27.2 L19.7 22.4z" fill="#f7c51c"/><path d="M29.3 10.0 L32.1 12.4 L22.5 24.8 L19.7 22.4z" fill="#fde12a"/><path d="M19.7 22.4 L25.3 27.2 L17.6 29.2z" fill="#565656"/></svg>
<svg style="left:5.500px;top:61.500px" width="46" height="40" viewBox="0 0 46 40"><path d="M2.500 30L8.500 13 34 31 43.500 17.500" fill="none" stroke="#b5262e" stroke-width="2.600"/><circle cx="23" cy="16" r="7.500" fill="#fff" stroke="#c94a52" stroke-width="1.800"/><path d="M20 13l6 6M26 13l-6 6" stroke="#b5262e" stroke-width="2.200"/></svg>
<svg style="left:5.500px;top:114.800px" width="46" height="40" viewBox="0 0 46 40"><path d="M2.500 28L20 17 34 30 43.500 16" fill="none" stroke="#b5262e" stroke-width="2.600"/><circle cx="22" cy="18" r="7.500" fill="#fff" stroke="#4a9a6a" stroke-width="1.800"/><path d="M22 13.500v9M17.500 18h9" stroke="#1f7a3a" stroke-width="2.400"/></svg>
<svg style="left:5.500px;top:168.300px" width="46" height="40" viewBox="0 0 46 40"><path d="M2.500 29L20 18 34 31 43.500 17" fill="none" stroke="#b5262e" stroke-width="2.600"/><circle cx="23" cy="18" r="7.500" fill="#c8282e" stroke="#b5262e" stroke-width="1.500"/><rect x="18.500" y="16.500" width="9" height="3" fill="#fff"/></svg>
<svg style="left:5.500px;top:222px" width="46" height="40" viewBox="0 0 46 40"><path d="M2.500 31L20 20 34 32.500 42.500 19" fill="none" stroke="#b5262e" stroke-width="2.600"/><path d="M29 4l5.500 5-6 7 3 2.500-13 3.500 3.500-12 3 2.500z" fill="#1a6fb8"/></svg>
<svg style="left:5.500px;top:287px" width="46" height="40" viewBox="0 0 46 40"><path d="M2.500 29L10 13.500 34 31 43.500 18" fill="none" stroke="#b5262e" stroke-width="2.600"/><g stroke="#111" stroke-width="2.200"><path d="M4 17.500l6 5.500M14 19.500l3.500-7M25 21l4 7.500M36 21.500l6 5.500"/></g><text x="25.500" y="14" font-family="Liberation Sans" font-weight="bold" font-size="11.500" fill="#222" text-anchor="middle">M</text></svg>
<svg style="left:6px;top:340.500px" width="46" height="40.500" viewBox="0 0 46 42" preserveAspectRatio="none"><rect x="1" y="1" width="42" height="40" fill="#bfe3f8" stroke="#5aa8dc" stroke-width="1.400"/><path d="M15 1v40M29 1v40M1 14h42M1 28h42" stroke="#5aa8dc" stroke-width="1.400"/><path d="M29 2h13v26H2V15h27z" fill="#fbbf14" stroke="#b5262e" stroke-width="2.400"/><path d="M15 15v13M29 15v13M29 14h13" stroke="#e89a1a" stroke-width="1.200"/></svg>
<svg style="left:5.500px;top:402px" width="46" height="40" viewBox="0 0 46 40"><path d="M2.500 31L9 14.500 34 33 43.500 19" fill="none" stroke="#b5262e" stroke-width="2.600"/><path d="M14 19l8-8.500 9.500 8-7 9.500c-3 1-9-4-10.500-9z" fill="#b2b2b2" stroke="#8e8e8e"/><path d="M17 21l6-7M20 23.500l6-7M23 26l6-7" stroke="#ececec" stroke-width="1"/><path d="M22 10.500l3.500-3.500 3 2 1.500-3.500 3 1-1 4 2.500 1.500-3 5z" fill="#2e8b4a"/></svg>
<svg style="left:6px;top:457px" width="46" height="40" viewBox="0 0 46 40"><path d="M2.500 23L8.500 9 34 24 43.500 11" fill="none" stroke="#b5262e" stroke-width="2.600"/><path d="M8 9h28v20H8z" fill="#f7c33a"/><path d="M5 15h31l4 17H10z" fill="#fbd23a" stroke="#e8a41a"/><path d="M2.500 23L8.500 9 34 24" fill="none" stroke="#b5262e" stroke-width="2.600" stroke-dasharray="22 100"/></svg>
<svg style="left:6px;top:511px" width="46" height="40" viewBox="0 0 46 40"><rect x="17" y="9" width="25" height="24.500" fill="#8cc0ee" stroke="#5a9ad6"/><rect x="22" y="9" width="14" height="8" fill="#c9c9c9"/><rect x="21.500" y="23" width="16" height="10.500" fill="#e9f2fb"/><path d="M24 27h10M24 30h10" stroke="#7a8a9a" stroke-width="1"/><path d="M2.500 24L8.500 9 34 26 43.500 12" fill="none" stroke="#b5262e" stroke-width="2.600"/></svg>
</div>
<!-- red highlight -->
<div class="abs" style="z-index:6;left:453px;top:103px;width:235px;height:54.500px;border:4px solid #ff0000"></div>
</body></html>
